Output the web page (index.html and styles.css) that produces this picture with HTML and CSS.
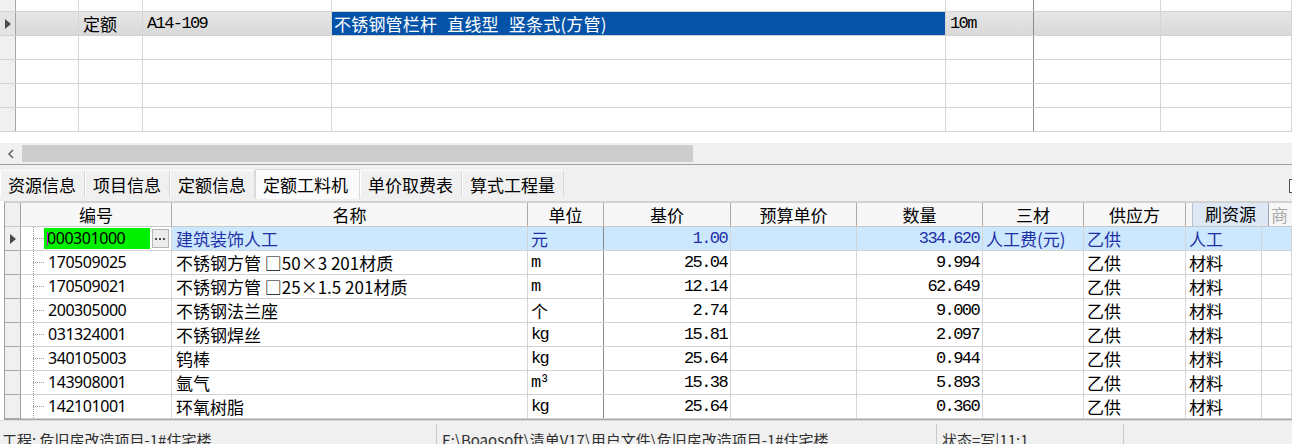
FILE: index.html
```html
<!DOCTYPE html>
<html lang="zh-CN">
<head>
<meta charset="utf-8">
<title>定额工料机</title>
<link rel="stylesheet" href="styles.css">
</head>
<body>
<div class="app">
  <div class="top-grid">
    <div class="trow partial">
      <div class="tc ind"></div><div class="tc"></div><div class="tc"></div><div class="tc"></div><div class="tc"></div><div class="tc dark"></div><div class="tc"></div><div class="tc"></div>
    </div>
    <div class="trow current">
      <div class="tc ind"><span class="arrow"></span></div>
      <div class="tc"></div>
      <div class="tc cjk">定额</div>
      <div class="tc mono">A14-109</div>
      <div class="tc cjk sel">不锈钢管栏杆 直线型 竖条式(方管)</div>
      <div class="tc mono dark">10m</div>
      <div class="tc"></div>
      <div class="tc"></div>
    </div>
    <div class="trow"><div class="tc ind"></div><div class="tc"></div><div class="tc"></div><div class="tc"></div><div class="tc"></div><div class="tc dark"></div><div class="tc"></div><div class="tc"></div></div>
    <div class="trow"><div class="tc ind"></div><div class="tc"></div><div class="tc"></div><div class="tc"></div><div class="tc"></div><div class="tc dark"></div><div class="tc"></div><div class="tc"></div></div>
    <div class="trow"><div class="tc ind"></div><div class="tc"></div><div class="tc"></div><div class="tc"></div><div class="tc"></div><div class="tc dark"></div><div class="tc"></div><div class="tc"></div></div>
    <div class="trow"><div class="tc ind"></div><div class="tc"></div><div class="tc"></div><div class="tc"></div><div class="tc"></div><div class="tc dark"></div><div class="tc"></div><div class="tc"></div></div>
  </div>

  <div class="hscroll">
    <div class="sb-arrow">
      <svg width="8" height="10" viewBox="0 0 8 10"><path d="M6 1 L2 5 L6 9" fill="none" stroke="#606060" stroke-width="1.5"/></svg>
    </div>
    <div class="sb-thumb"></div>
  </div>

  <div class="tabstrip">
    <div class="tab">资源信息</div>
    <div class="tab">项目信息</div>
    <div class="tab">定额信息</div>
    <div class="tab active">定额工料机</div>
    <div class="tab">单价取费表</div>
    <div class="tab">算式工程量</div>
    <div class="tab-check"></div>
  </div>

  <div class="grid">
    <div class="hrow">
      <div class="hc ind"></div>
      <div class="hc">编号</div>
      <div class="hc">名称</div>
      <div class="hc">单位</div>
      <div class="hc">基价</div>
      <div class="hc">预算单价</div>
      <div class="hc">数量</div>
      <div class="hc">三材</div>
      <div class="hc">供应方</div>
      <div class="hc btncell"><span class="hbtn">刷资源</span></div>
      <div class="hc faded">商</div>
    </div>

    <div class="drow selected">
      <div class="dc ind"><span class="arrow"></span></div>
      <div class="dc tree first"><span class="branch"></span></div>
      <div class="dc code"><span class="edit"><span class="caret"></span>000301000</span><span class="dots"><svg width="11" height="3" viewBox="0 0 11 3"><rect x="0" y="0" width="2" height="2" fill="#4a4a4a"/><rect x="4" y="0" width="2" height="2" fill="#4a4a4a"/><rect x="8" y="0" width="2" height="2" fill="#4a4a4a"/></svg></span></div>
      <div class="dc name">建筑装饰人工</div>
      <div class="dc unit cjk dark">元</div>
      <div class="dc num">1.00</div>
      <div class="dc num"></div>
      <div class="dc num">334.620</div>
      <div class="dc txt">人工费(元)</div>
      <div class="dc txt">乙供</div>
      <div class="dc txt">人工</div>
      <div class="dc"></div>
    </div>
    <div class="drow">
      <div class="dc ind"></div>
      <div class="dc tree"><span class="branch"></span></div>
      <div class="dc code">170509025</div>
      <div class="dc name">不锈钢方管 □50×3 201材质</div>
      <div class="dc unit dark">m</div>
      <div class="dc num">25.04</div>
      <div class="dc num"></div>
      <div class="dc num">9.994</div>
      <div class="dc txt"></div>
      <div class="dc txt">乙供</div>
      <div class="dc txt">材料</div>
      <div class="dc"></div>
    </div>
    <div class="drow">
      <div class="dc ind"></div>
      <div class="dc tree"><span class="branch"></span></div>
      <div class="dc code">170509021</div>
      <div class="dc name">不锈钢方管 □25×1.5 201材质</div>
      <div class="dc unit dark">m</div>
      <div class="dc num">12.14</div>
      <div class="dc num"></div>
      <div class="dc num">62.649</div>
      <div class="dc txt"></div>
      <div class="dc txt">乙供</div>
      <div class="dc txt">材料</div>
      <div class="dc"></div>
    </div>
    <div class="drow">
      <div class="dc ind"></div>
      <div class="dc tree"><span class="branch"></span></div>
      <div class="dc code">200305000</div>
      <div class="dc name">不锈钢法兰座</div>
      <div class="dc unit cjk dark">个</div>
      <div class="dc num">2.74</div>
      <div class="dc num"></div>
      <div class="dc num">9.000</div>
      <div class="dc txt"></div>
      <div class="dc txt">乙供</div>
      <div class="dc txt">材料</div>
      <div class="dc"></div>
    </div>
    <div class="drow">
      <div class="dc ind"></div>
      <div class="dc tree"><span class="branch"></span></div>
      <div class="dc code">031324001</div>
      <div class="dc name">不锈钢焊丝</div>
      <div class="dc unit dark">kg</div>
      <div class="dc num">15.81</div>
      <div class="dc num"></div>
      <div class="dc num">2.097</div>
      <div class="dc txt"></div>
      <div class="dc txt">乙供</div>
      <div class="dc txt">材料</div>
      <div class="dc"></div>
    </div>
    <div class="drow">
      <div class="dc ind"></div>
      <div class="dc tree"><span class="branch"></span></div>
      <div class="dc code">340105003</div>
      <div class="dc name">钨棒</div>
      <div class="dc unit dark">kg</div>
      <div class="dc num">25.64</div>
      <div class="dc num"></div>
      <div class="dc num">0.944</div>
      <div class="dc txt"></div>
      <div class="dc txt">乙供</div>
      <div class="dc txt">材料</div>
      <div class="dc"></div>
    </div>
    <div class="drow">
      <div class="dc ind"></div>
      <div class="dc tree"><span class="branch"></span></div>
      <div class="dc code">143908001</div>
      <div class="dc name">氩气</div>
      <div class="dc unit dark">m³</div>
      <div class="dc num">15.38</div>
      <div class="dc num"></div>
      <div class="dc num">5.893</div>
      <div class="dc txt"></div>
      <div class="dc txt">乙供</div>
      <div class="dc txt">材料</div>
      <div class="dc"></div>
    </div>
    <div class="drow">
      <div class="dc ind"></div>
      <div class="dc tree"><span class="branch"></span></div>
      <div class="dc code">142101001</div>
      <div class="dc name">环氧树脂</div>
      <div class="dc unit dark">kg</div>
      <div class="dc num">25.64</div>
      <div class="dc num"></div>
      <div class="dc num">0.360</div>
      <div class="dc txt"></div>
      <div class="dc txt">乙供</div>
      <div class="dc txt">材料</div>
      <div class="dc"></div>
    </div>
  </div>

  <div class="statusbar">
    <div class="panel p1">工程: 危旧房改造项目-1#住宅楼</div>
    <div class="panel p2">E:\Boaosoft\清单V17\用户文件\危旧房改造项目-1#住宅楼</div>
    <div class="panel p3">状态=写|11:1</div>
    <div class="panel p4"></div>
  </div>
</div>
</body>
</html>
```

FILE: styles.css
```css
html, body {
  margin: 0;
  padding: 0;
  width: 1292px;
  height: 444px;
  overflow: hidden;
  background: #ffffff;
}

.app {
  width: 1292px;
  height: 444px;
  display: flex;
  flex-direction: column;
  font-family: "Noto Sans CJK SC", "Noto Sans", sans-serif;
  font-size: 17px;
  color: #000;
}

/* ---------- upper grid ---------- */
.top-grid {
  height: 143px;
  background: #fff;
  flex: none;
}

.trow {
  display: grid;
  grid-template-columns: 16px 63px 64px 189px 614px 88px 127px 131px;
  height: 24px;
  border-bottom: 1px solid #d3d3d3;
  box-sizing: border-box;
}

.trow.partial {
  height: 12px;
}

.tc {
  border-right: 1px solid #d6d6d6;
  box-sizing: border-box;
  line-height: 23px;
  padding-left: 4px;
  white-space: nowrap;
  overflow: hidden;
}

.tc.ind {
  background: #f0f0f0;
  border-right: 1px solid #a6a6a6;
  padding: 0;
  display: flex;
  align-items: center;
  justify-content: center;
}

.tc.dark {
  border-right: 1px solid #8a8a8a;
}

.trow.current .tc {
  background: linear-gradient(#e6e6e6, #d9d9d9);
}

.trow.current .tc.ind {
  background: #e4e4e4;
}

.trow.current .tc.sel {
  background: #0453a8;
  color: #fff;
  padding-left: 2px;
  word-spacing: 6px;
  letter-spacing: 0.2px;
}

.cjk {
  font-family: "Noto Sans CJK SC", sans-serif;
  font-size: 17px;
}

.mono {
  font-family: "Liberation Mono", "DejaVu Sans Mono", monospace;
  font-size: 17px;
  letter-spacing: -1.6px;
}

.arrow {
  width: 0;
  height: 0;
  border-left: 6px solid #4a4a4a;
  border-top: 5px solid transparent;
  border-bottom: 5px solid transparent;
  margin-left: 1px;
}

/* ---------- scrollbar ---------- */
.hscroll {
  height: 22px;
  background: #f0f0f0;
  display: flex;
  align-items: center;
  flex: none;
  border-bottom: 1px solid #a0a0a0;
  box-sizing: border-box;
}

.sb-arrow {
  width: 22px;
  height: 20px;
  display: flex;
  align-items: center;
  justify-content: center;
}

.sb-thumb {
  width: 671px;
  height: 17px;
  background: #cdcdcd;
}

/* ---------- tabs ---------- */
.tabstrip {
  height: 36px;
  background: #f0f0f0;
  display: flex;
  align-items: flex-end;
  padding: 0 0 4px 0;
  box-sizing: border-box;
  flex: none;
  overflow: hidden;
}

.tab {
  height: 27px;
  line-height: 27px;
  padding: 0 8px 0 7px;
  box-sizing: border-box;
  border-left: 1px solid #fdfdfd;
  border-top: 1px solid #fdfdfd;
  border-right: 1px solid #d8d8d8;
  background: #f0f0f0;
  white-space: nowrap;
  font-size: 17px;
}

.tab.active {
  height: 30px;
  line-height: 29px;
  margin-bottom: -2px;
  background: #fbfbfb;
  border: 1px solid #d9d9d9;
  border-bottom: 0;
  padding: 0 11px 0 7px;
}

.tab-check {
  margin-left: auto;
  margin-right: -10px;
  align-self: center;
  margin-top: 10px;
  width: 11px;
  height: 12px;
  border: 1px solid #505050;
  background: #fff;
}

/* ---------- lower grid ---------- */
.grid {
  margin-left: 4px;
  border-left: 1px solid #a0a0a0;
  border-top: 2px solid #d2d2d2;
  border-bottom: 1px solid #a8a8a8;
  background: #fff;
  flex: none;
}

.hrow {
  display: grid;
  grid-template-columns: 16px 151px 356px 76px 127px 126px 126px 101px 102px 83px 1fr;
  height: 24px;
  background: #f7f7f7;
  border-bottom: 1px solid #c8c8c8;
  box-sizing: border-box;
}

.hc {
  border-right: 1px solid #a9a9a9;
  box-sizing: border-box;
  text-align: center;
  line-height: 23px;
  white-space: nowrap;
}

.hc.ind {
  background: #f0f0f0;
  border-right: 1px solid #a0a0a0;
}

.hc.btncell {
  border-right: 0;
  padding-left: 6px;
}

.hbtn {
  display: block;
  height: 23px;
  line-height: 22px;
  background: #dde8f4;
  border-left: 1px solid #b8c4d0;
  border-right: 1px solid #9aa6b2;
  text-align: center;
  box-sizing: border-box;
}

.hc.faded {
  border-right: 0;
  color: #a8a8a8;
  text-align: left;
  padding-left: 2px;
  overflow: hidden;
}

.drow {
  display: grid;
  grid-template-columns: 16px 23px 128px 356px 76px 127px 126px 126px 101px 102px 76px 1fr;
  height: 24px;
  border-bottom: 1px solid #d3d3d3;
  box-sizing: border-box;
}

.dc {
  border-right: 1px solid #d6d6d6;
  box-sizing: border-box;
  line-height: 23px;
  white-space: nowrap;
  overflow: hidden;
}

.dc.ind {
  background: #f0f0f0;
  border-right: 1px solid #a0a0a0;
  display: flex;
  align-items: center;
  justify-content: center;
}

.drow .dc.ind {
  box-shadow: 0 1px 0 #a8a8a8;
}

.dc.tree {
  border-right: 0;
  background-image: linear-gradient(#9a9a9a 50%, transparent 50%);
  background-size: 1px 2px;
  background-position: 12px 0;
  background-repeat: repeat-y;
  display: flex;
  align-items: center;
}

.dc.tree.first {
  background-position: 12px 12px;
}

.branch {
  display: block;
  margin-left: 12px;
  width: 11px;
  height: 1px;
  background-image: linear-gradient(90deg, #9a9a9a 50%, transparent 50%);
  background-size: 2px 1px;
}

.dc.code {
  font-family: "Noto Sans", "Liberation Sans", sans-serif;
  font-size: 16px;
  letter-spacing: -0.45px;
  padding-left: 4px;
  display: flex;
  align-items: center;
}

.drow.selected .dc.code {
  padding-left: 0;
  background: #fff;
}

.edit {
  width: 106px;
  height: 21px;
  line-height: 21px;
  background: #00f000;
  color: #000;
  display: flex;
  align-items: center;
  padding-left: 3px;
  box-sizing: border-box;
}

.caret {
  width: 1px;
  height: 14px;
  background: #d000d0;
  margin-right: -1px;
  position: relative;
  z-index: 1;
}

.dots {
  width: 17px;
  height: 19px;
  margin-left: 2px;
  background: #ececec;
  border: 1px solid #b4b4b4;
  box-sizing: border-box;
  display: flex;
  align-items: center;
  justify-content: center;
  padding-top: 2px;
}

.dots svg {
  display: block;
}

.dc.name {
  padding-left: 4px;
  font-size: 17px;
}

.dc.unit {
  padding-left: 3px;
  font-family: "Liberation Mono", "DejaVu Sans Mono", monospace;
  font-size: 17px;
  letter-spacing: -1.6px;
}

.dc.unit.cjk {
  font-family: "Noto Sans CJK SC", sans-serif;
  font-size: 17px;
  letter-spacing: 0;
}

.dc.num {
  text-align: right;
  padding-right: 3px;
  font-family: "Liberation Mono", "DejaVu Sans Mono", monospace;
  font-size: 17px;
  letter-spacing: -1.6px;
}

.dc.dark {
  border-right: 1px solid #8a8a8a;
}

.dc.txt {
  padding-left: 3px;
}

.drow.selected .dc {
  background-color: #cce8ff;
  color: #1f2fa5;
}

.drow.selected .dc.ind {
  background: #f0f0f0;
}

.drow.selected .dc.tree {
  background-color: #fff;
}

/* ---------- status bar ---------- */
.statusbar {
  flex: 1;
  background: #f0f0f0;
  display: flex;
  border-top: 1px solid #dcdcdc;
  font-size: 15px;
  color: #303030;
}

.panel {
  padding-top: 9px;
  line-height: 20px;
  white-space: nowrap;
  box-sizing: border-box;
}

.p1 {
  width: 436px;
  padding-left: 2px;
}

.p2 {
  width: 500px;
  padding-left: 5px;
  border-left: 1px solid #c8c8c8;
  margin-top: 3px;
  padding-top: 6px;
}

.p3 {
  width: 187px;
  padding-left: 5px;
  border-left: 1px solid #c8c8c8;
  margin-top: 3px;
  padding-top: 6px;
}

.p4 {
  flex: 1;
  border-left: 1px solid #c8c8c8;
  margin-top: 3px;
}
```
